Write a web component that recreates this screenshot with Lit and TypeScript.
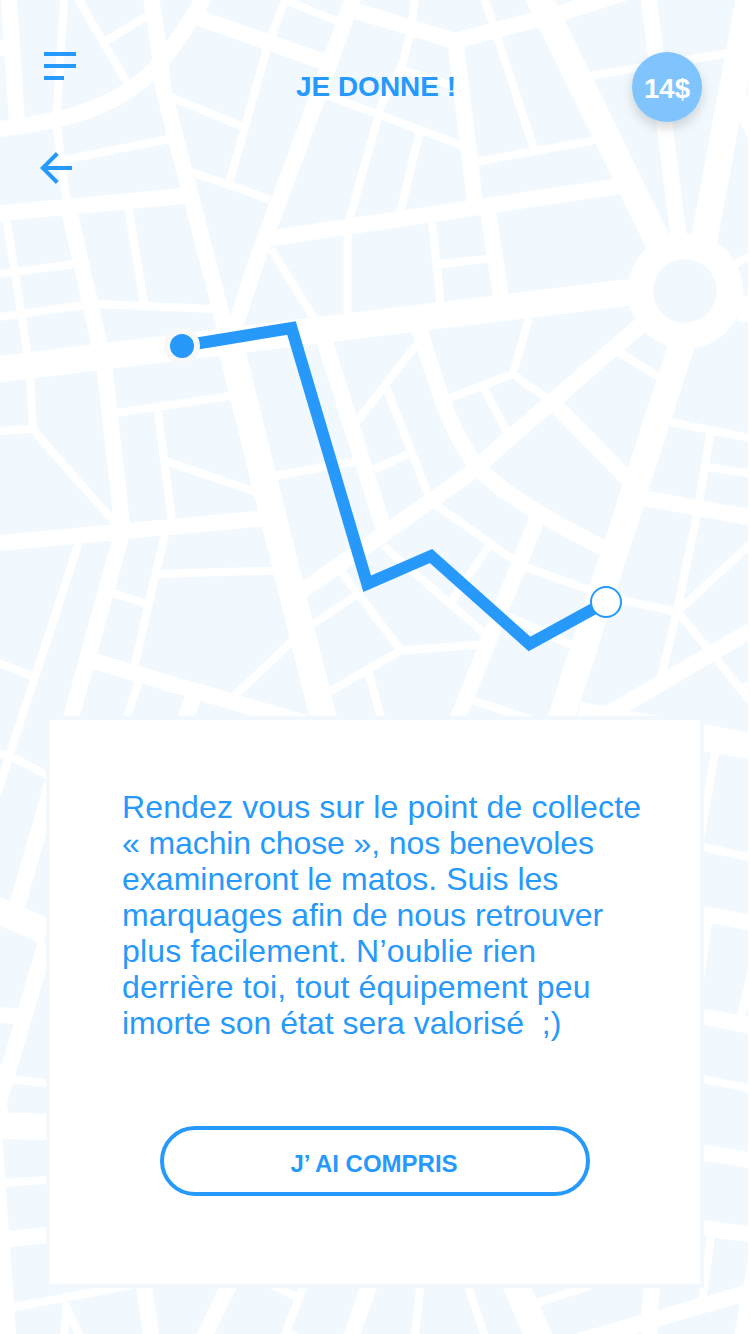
import { LitElement, html, svg, css } from "lit";
import { customElement } from "lit/decorators.js";

/* Street centre lines, grouped by road width. */
const LANES: string[] = [
  "M64.5 -6L56.7 112", "M56.7 126L66.7 201", "M74 -8L129 86", "M106 41L147 16",
  "M166 95L247 128.5", "M62 160L170 139", "M190 171.5L270 199.5", "M267 48L229 184",
  "M128 206L144.3 304", "M92 303.7L214 309", "M6.3 218L27.5 354", "M-4 274.5L75 264", "M-4 317.5L84 305",
  "M337 21.3L285 0L271 37", "M415.6 -6L411 30L402 66L382 103L349 221", "M403 70L453 86",
  "M325 94.5L462 145.5", "M419.5 132L400 214", "M476 162L595 140", "M482.5 -8L534 149",
  "M271 249L315 320", "M347.6 232L347.6 317", "M431.7 219L440.7 304", "M440 264L488 259",
  "M420 340L355 424", "M386 387L428 494", "M374 469.5L408 454", "M274 476L355 461.5",
  "M588 76.3L729 53", "M736 263.5L752 255",
  "M157 574L276 570.5", "M30 376L33 430L116 524", "M-4 431.3L34 428.5", "M116 413L230 396",
  "M157.5 409L172 521", "M166 461L256 492", "M79 542L-6 803", "M-4 662L33 676.5",
  "M164.5 535L134.5 666", "M139 680L126 720", "M113 593.3L146 603.5", "M233 697L292 641.5",
  "M313 624L358 594", "M341 571L401 650.5", "M328 692.5L401 650.5L482 644.5", "M368.5 672L381 718",
  "M383 545.5L484 633", "M436 505L513 559.5", "M489 546L451 602", "M525 567L592 590.5",
  "M503 614L573 645.5", "M473 700.5L533 720", "M618 351.5L659 377", "M529 318L513 374L448 398.5",
  "M513 374L547 399", "M484 388L507 432", "M671 422L750 438", "M710.5 433L699 502",
  "M697 514L677 611L661 678", "M708 467L750 473.5", "M678 611L750 544.5", "M619 599.5L678 612L750 700.5",
  "M741 689L750 685", "M-4 753L12 757L48 775.5", "M13 1079.5L47 1083.2", "M4 1183L47 1179.7",
  "M13 1307.2L132 1285", "M66.3 1302L64 1340", "M66 1306L82 1341", "M303.5 1286L283 1340",
  "M270 1284L297 1297", "M420.3 1286L414.4 1340", "M468 1286L486 1340", "M537 1303L590 1286",
  "M715.3 751L698 852", "M703 847L750 857.5", "M752 969L740.5 1018", "M703 1079.3L750 1088",
  "M711 1236L702.5 1298", "M290 1334L297 1337",
];

const STREETS: string[] = [
  "M8.4 -8L17 122", "M-4 48L5 48", "M-6 129.7C20 127 38 123.5 57 119.5C100 110 138 90 161 62C180 38 192 20 209 -11",
  "M150 -10L160.7 60L163 88L225.5 330", "M-6 213.8L186 195.8", "M69.5 212L100 347",
  "M199 18L323 61.5", "M356.5 -11L298 150L258 257L233 332", "M357 11.3L455 41L500 29L564 12L640 -12",
  "M455.3 40L475.3 204", "M487.3 206L501 297", "M264 239.4L619 186", "M324 339L384 530",
  "M418 325L429 360C439 390 450 430 475 464C492 484 525 509 604 548",
  "M302 591L472 472L500 446.5L600 360L642 324", "M648 -8L678.5 236",
  "M-6 543.5L264 518.3", "M104.5 367L122.3 527", "M122 533L70.7 719", "M93 661L305 723",
  "M193 697L185.5 719", "M537 519L457.5 719", "M555 405L628 479", "M645 498.3L750 517.3",
  "M606 715L750 631", "M53.5 779L17.3 905", "M45.8 943L-4 1112", "M-4 1015L18 1016",
  "M8 1239L47 1235", "M143 1280L152 1342", "M232 1279L201 1343", "M371.5 1279L349 1343",
  "M652.3 1286L649 1315L650 1340", "M580 1341L756 1290", "M757.6 1252L741 1343",
  "M703 914L750 922.5", "M704 922L696 981", "M703 1016.3L750 1025.7", "M703 1152.5L750 1160.2",
  "M703 1228L750 1234.3",
];

const AVENUES: string[] = [
  "M-10 370.2L635 291.7", "M228 335L326 729", "M681.5 345L559 725", "M529.3 -22L662 250",
  "M751.5 -14L704 240", "M738 308.3L750 309", "M578 715L750 746", "M-20 902.5L48 932.5",
  "M-4 1125.3L47 1127", "M510.7 1273L545 1351",
];

@customElement("city-map")
class CityMap extends LitElement {
  static styles = css`
    :host { display: block; }
    svg { display: block; width: 750px; height: 1334px; }
    .land { fill: #f1f9ff; }
    .road { fill: none; stroke: #fff; stroke-linejoin: miter; }
    .lane { stroke-width: 8; }
    .street { stroke-width: 16; }
    .avenue { stroke-width: 26.5; }
    .white { fill: #fff; }
    .route { fill: none; stroke: #2699fb; stroke-width: 12; stroke-linejoin: miter; }
    .halo { fill: #f8f8f8; }
    .start { fill: #2699fb; }
    .end { fill: #fff; stroke: #2699fb; stroke-width: 2; }
  `;

  render() {
    return html`<svg viewBox="0 0 750 1334" aria-hidden="true">
      <rect class="land" width="750" height="1334"></rect>
      ${LANES.map((d) => svg`<path class="road lane" d=${d}></path>`)}
      ${STREETS.map((d) => svg`<path class="road street" d=${d}></path>`)}
      ${AVENUES.map((d) => svg`<path class="road avenue" d=${d}></path>`)}
      <path class="white" d="M0 1062L8 1111L2.5 1139L16 1334H0Z"></path>
      <path class="white" d="M734 60H750V144L740 121.5L733 110Z"></path>
      <path class="land" d="M750 75L746 83L748 86L745.5 92L750 101Z"></path>
      <circle class="white" cx="685.5" cy="291" r="57.8"></circle>
      <circle class="land" cx="684.8" cy="291" r="31.8"></circle>
      <rect class="white" x="748" width="2" height="1334"></rect>
      <path class="route" d="M182 346L291.5 328L367.2 583.7L431 556L529.5 644L606 602"></path>
      <circle class="halo" cx="182" cy="346" r="18"></circle>
      <circle class="start" cx="182" cy="346" r="12"></circle>
      <circle class="end" cx="606" cy="602" r="15"></circle>
    </svg>`;
  }
}

interface Line {
  text: string;
  tracking: number;
}

const LINES: Line[] = [
  { text: "Rendez vous sur le point de collecte", tracking: 0.14 },
  { text: "« machin chose », nos benevoles", tracking: -0.1 },
  { text: "examineront le matos. Suis les", tracking: 0.02 },
  { text: "marquages afin de nous retrouver", tracking: 0.03 },
  { text: "plus facilement. N’oublie rien", tracking: 0.17 },
  { text: "derrière toi, tout équipement peu", tracking: 0.19 },
  { text: "imorte son état sera valorisé \u00a0;)", tracking: 0 },
];

@customElement("app-root")
class AppRoot extends LitElement {
  static styles = css`
    :host {
      display: grid;
      width: 750px;
      height: 1334px;
      overflow: hidden;
      background: #fff;
      color: #2699fb;
      font-family: "Liberation Sans", Arial, Helvetica, sans-serif;
    }
    city-map, .screen { grid-area: 1 / 1; }
    .screen {
      z-index: 1;
      display: flex;
      flex-direction: column;
      box-sizing: border-box;
      height: 1334px;
      padding: 52px 46px 46px;
    }
    header {
      display: grid;
      grid-template-columns: 1fr auto 1fr;
      height: 70px;
      margin: 0 2px 0 -2px;
    }
    .icon { display: block; }
    .title {
      margin: 0 -3px 0 3px;
      padding-top: 19px;
      font-size: 28px;
      line-height: 32px;
      font-weight: 700;
      white-space: nowrap;
    }
    .badge {
      justify-self: end;
      display: flex;
      align-items: center;
      justify-content: center;
      box-sizing: border-box;
      width: 70px;
      height: 70px;
      padding-top: 4px;
      border-radius: 50%;
      background: #7fc4fd;
      box-shadow: 0 6px 12px rgba(0, 0, 0, 0.16);
      color: #fff;
      font-size: 27.5px;
      line-height: 32px;
      font-weight: 700;
    }
    .back { margin: 30px 0 0 -6px; height: 32px; }
    .card {
      display: flex;
      flex-direction: column;
      align-items: center;
      box-sizing: border-box;
      width: 658px;
      height: 572px;
      margin-top: auto;
      border: 4px solid #f1f9ff;
      background: #fff;
    }
    .text {
      align-self: flex-start;
      margin: 69px 0 0 72px;
      font-size: 32px;
      line-height: 36px;
      white-space: nowrap;
    }
    .line { display: block; }
    .ok {
      width: 430px;
      height: 70px;
      margin-top: 85px;
      padding: 6px 2px 0 0;
      border: 4px solid #2699fb;
      border-radius: 35px;
      background: #fff;
      color: #2699fb;
      font: 700 24px "Liberation Sans", Arial, sans-serif;
    }
  `;

  render() {
    return html`
      <city-map></city-map>
      <div class="screen">
        <header>
          <svg class="icon" width="32" height="28" viewBox="0 0 32 28">
            <path fill="#2699fb" d="M0 0H32V4H0ZM0 12H32V16H0ZM0 24H20V28H0Z"></path>
          </svg>
          <h1 class="title">JE DONNE !</h1>
          <div class="badge">14$</div>
        </header>
        <svg class="icon back" width="32" height="32" viewBox="0 0 32 32">
          <path fill="none" stroke="#2699fb" stroke-width="4" d="M17.3 1.5L2.8 16L17.3 30.5M3 16H32"></path>
        </svg>
        <section class="card">
          <p class="text">${LINES.map(
            (l) => html`<span class="line" style="letter-spacing:${l.tracking}px">${l.text}</span>`
          )}</p>
          <button class="ok">J’ AI COMPRIS</button>
        </section>
      </div>
    `;
  }
}
